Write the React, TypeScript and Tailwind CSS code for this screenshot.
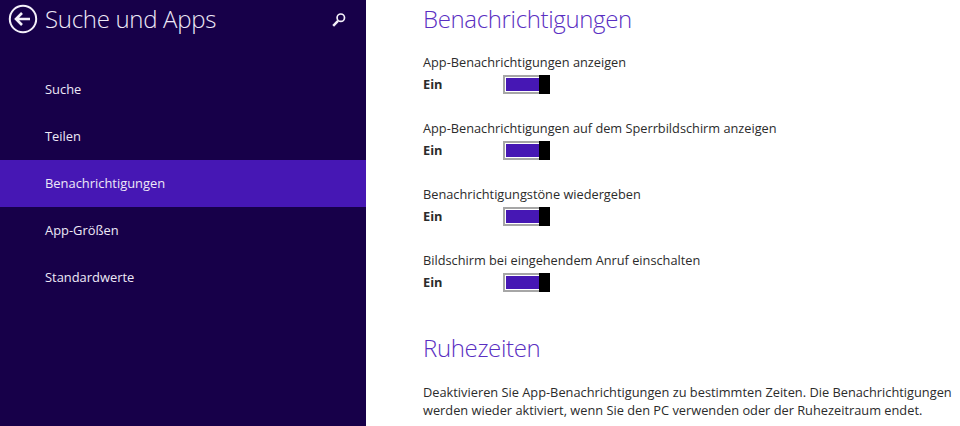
import React from "react";

const navItems = ["Suche", "Teilen", "Benachrichtigungen", "App-Größen", "Standardwerte"];

const toggles = [
  "App-Benachrichtigungen anzeigen",
  "App-Benachrichtigungen auf dem Sperrbildschirm anzeigen",
  "Benachrichtigungstöne wiedergeben",
  "Bildschirm bei eingehendem Anruf einschalten",
];

const BackIcon = () => (
  <svg width="30" height="30" viewBox="0 0 30 30" fill="none" stroke="#f4f0fa">
    <circle cx="15" cy="15" r="13.2" strokeWidth="2" />
    <path d="M8.5 15H22M14 9l-6 6 6 6" strokeWidth="2.6" />
  </svg>
);

const SearchIcon = () => (
  <svg width="16" height="16" viewBox="0 0 16 16" fill="none" stroke="#f4f0fa">
    <circle cx="9.8" cy="5.7" r="3.7" strokeWidth="1.7" />
    <path d="M7 8.8L2.2 13.8" strokeWidth="2.4" />
  </svg>
);

const Toggle = () => (
  <div className="flex h-[19px] w-[47px]">
    <div className="flex-1 border-2 border-r-0 border-[#a6a6a6] bg-white py-px pl-px">
      <div className="h-full bg-[#4617b4]" />
    </div>
    <div className="w-[11px] bg-black" />
  </div>
);

export default function App() {
  return (
    <div className="flex h-[426px] w-[960px] overflow-hidden bg-white font-['Open_Sans',sans-serif]">
      {/* Sidebar */}
      <div className="w-[366px] shrink-0 bg-[#170049] text-[#eee9f7]">
        <div className="flex h-[66px] items-start pl-2 pr-[19px] pt-[4px]">
          <BackIcon />
          <h1 className="ml-[7px] text-[24px] leading-[30px] font-light tracking-[-0.3px]">Suche und Apps</h1>
          <div className="ml-auto pt-[8px]">
            <SearchIcon />
          </div>
        </div>
        {navItems.map((item) => (
          <div
            key={item}
            className={`flex h-[47px] items-center pl-[45px] text-[12.9px] ${item === "Benachrichtigungen" ? "bg-[#4617b4]" : ""}`}
          >
            {item}
          </div>
        ))}
      </div>

      {/* Content */}
      <div className="flex-1 pl-[57px] text-[#2b2b2b]">
        <h2 className="pt-[3px] text-[24px] leading-[32px] font-light tracking-[-0.35px] text-[#5a2fc2]">Benachrichtigungen</h2>
        <div className="mt-[17px] flex flex-col gap-[24px]">
          {toggles.map((label) => (
            <div key={label}>
              <div className="text-[12.75px] leading-[20px]">{label}</div>
              <div className="mt-[3px] flex h-[19px] items-center">
                <span className="w-[80px] text-[12.8px] font-bold">Ein</span>
                <Toggle />
              </div>
            </div>
          ))}
        </div>
        <h2 className="mt-[40px] text-[24px] leading-[32px] font-light tracking-[-0.35px] text-[#5a2fc2]">Ruhezeiten</h2>
        <p className="mt-[19px] w-[537px] text-[12.8px] leading-[18px]">
          Deaktivieren Sie App-Benachrichtigungen zu bestimmten Zeiten. Die Benachrichtigungen werden wieder aktiviert, wenn Sie den PC verwenden oder der Ruhezeitraum endet.
        </p>
      </div>
    </div>
  );
}
